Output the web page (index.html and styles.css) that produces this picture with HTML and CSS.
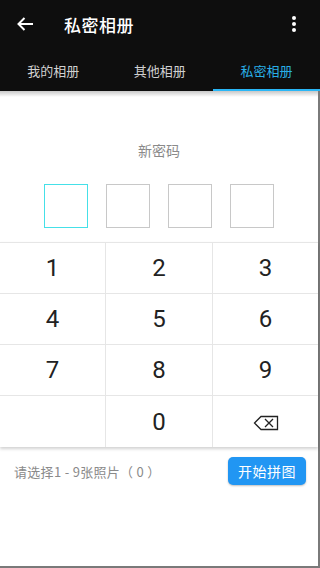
FILE: index.html
```html
<!DOCTYPE html>
<html lang="zh">
<head>
<meta charset="utf-8">
<link rel="stylesheet" href="styles.css">
</head>
<body>
<div class="app">
  <header class="topbar">
    <svg class="back" width="18" height="16" viewBox="0 0 18 16"><path d="M17 8H2.5M8.5 2L2.5 8l6 6" fill="none" stroke="#fff" stroke-width="2"/></svg>
    <div class="title">私密相册</div>
    <svg class="more" width="4" height="16" viewBox="0 0 4 16"><circle cx="2" cy="2" r="2" fill="#fff"/><circle cx="2" cy="8" r="2" fill="#fff"/><circle cx="2" cy="14" r="2" fill="#fff"/></svg>
  </header>
  <nav class="tabs">
    <div class="tab">我的相册</div>
    <div class="tab">其他相册</div>
    <div class="tab active">私密相册</div>
  </nav>
  <main class="content">
    <section class="pwd">
      <div class="label">新密码</div>
      <div class="boxes">
        <div class="box focus"></div>
        <div class="box"></div>
        <div class="box"></div>
        <div class="box"></div>
      </div>
    </section>
    <section class="keypad">
      <div class="key">1</div><div class="key">2</div><div class="key">3</div>
      <div class="key">4</div><div class="key">5</div><div class="key">6</div>
      <div class="key">7</div><div class="key">8</div><div class="key">9</div>
      <div class="key"></div><div class="key">0</div>
      <div class="key"><svg width="26" height="16" viewBox="0 0 26 16"><path d="M8 1.5H24.5V14.5H8L1.5 8Z" fill="none" stroke="#222" stroke-width="1.3" stroke-linejoin="miter"/><path d="M12 4L20 12M20 4L12 12" stroke="#222" stroke-width="1.3"/></svg></div>
    </section>
    <section class="bottom">
      <div class="hint">请选择1 - 9张照片（ 0 ）</div>
      <div class="btn">开始拼图</div>
    </section>
  </main>
</div>
</body>
</html>
```
FILE: styles.css
```css
html, body { margin: 0; padding: 0; }
body {
  width: 320px; height: 568px; overflow: hidden; background: #fff;
  font-family: "Noto Sans CJK SC", "Noto Sans", Roboto, sans-serif;
}
.app { display: flex; flex-direction: column; width: 320px; height: 568px; }
.topbar {
  height: 48px; background: #0e0e0e; display: flex; align-items: center;
  padding: 0 0 0 16px; box-sizing: border-box;
}
.back { flex: none; }
.title { color: #fff; font-size: 17px; font-weight: 500; margin-left: 30px; flex: 1; letter-spacing: 0.5px; }
.more { margin-right: 24px; }
.tabs { height: 43px; background: #0e0e0e; display: flex; }
.tab {
  flex: 1; display: flex; align-items: center; justify-content: center;
  color: #d0d0d0; font-size: 13px; box-sizing: border-box; padding-top: 3px;
  border-bottom: 2px solid transparent;
}
.tab.active { color: #29aee6; border-bottom-color: #29b6f6; flex: 0 0 107px; }
.content {
  flex: 1; display: flex; flex-direction: column;
  border-right: 2px solid #7a7a7a; border-bottom: 2px solid #7a7a7a;
  background: linear-gradient(#c8c8c8, #fff 6px);
}
.pwd { display: flex; flex-direction: column; align-items: center; padding-top: 49px; }
.label { color: #8a8a8a; font-size: 14px; line-height: 20px; }
.boxes { display: flex; gap: 18px; margin-top: 24px; }
.box { width: 44px; height: 44px; box-sizing: border-box; border: 1px solid #c8c8c8; }
.box.focus { border-color: #45e0e8; }
.keypad {
  margin-top: 14px; display: grid; grid-template-columns: 106px 107px 1fr;
  grid-auto-rows: 51px; border-top: 1px solid #e6e6e6;
  box-shadow: 0 2px 3px rgba(0,0,0,0.18); position: relative;
}
.key {
  display: flex; align-items: center; justify-content: center;
  font-family: Roboto, sans-serif; font-size: 24px; color: #222;
  border-bottom: 1px solid #e6e6e6; border-right: 1px solid #e6e6e6;
  box-sizing: border-box;
}
.key:nth-child(3n) { border-right: none; }
.key:nth-child(n+10) { border-bottom: none; }
.key svg { margin-top: 2px; }
.bottom { display: flex; align-items: center; justify-content: space-between; padding: 10px 12px 0 14px; }
.hint { color: #8a8a8a; font-size: 13px; letter-spacing: 0.3px; }
.btn {
  background: #2196f3; color: #fff; font-size: 14px; width: 78px; height: 28px;
  border-radius: 5px; display: flex; align-items: center; justify-content: center;
  box-shadow: 0 1px 2px rgba(0,0,0,0.25); letter-spacing: 0.5px;
}
```
